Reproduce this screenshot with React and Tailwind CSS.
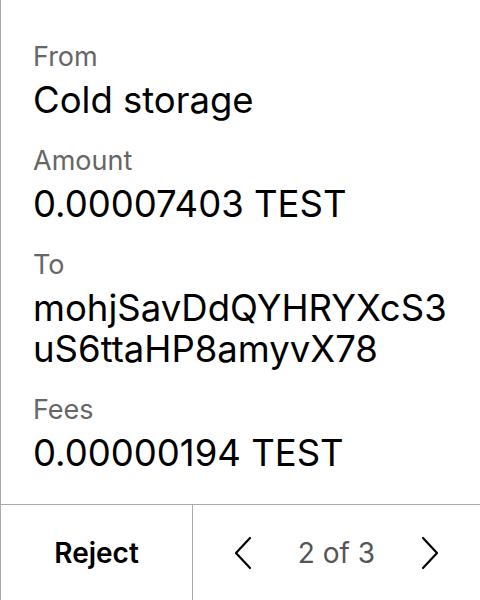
import React from 'react';

const Field = ({ label, children }) => (
  <div className="flex flex-col">
    <span className="text-[27px] leading-[32px] text-[#666666]">{label}</span>
    <span className="mt-[7px] text-[36.5px] leading-[41px] text-black">{children}</span>
  </div>
);

const Chevron = ({ dir }) => (
  <svg width="20" height="34" viewBox="0 0 20 34" fill="none" stroke="#000" strokeWidth="2.2" strokeLinecap="round" strokeLinejoin="round">
    {dir === 'left' ? <path d="M17 2 L3 17 L17 32" /> : <path d="M3 2 L17 17 L3 32" />}
  </svg>
);

export default function App() {
  return (
    <div className="flex h-[600px] w-[480px] flex-col border-l border-[#aaaaaa] bg-white font-['Inter',sans-serif]">
      <div className="flex flex-1 flex-col gap-[24px] pl-[32px] pt-[41px]">
        <Field label="From">Cold storage</Field>
        <Field label="Amount">0.00007403 TEST</Field>
        <Field label="To">
          mohjSavDdQYHRYXcS3
          <br />
          uS6ttaHP8amyvX78
        </Field>
        <Field label="Fees">0.00000194 TEST</Field>
      </div>
      <div className="flex h-[96px] border-t border-[#aaaaaa]">
        <button className="flex w-[192px] items-center justify-center border-r border-[#aaaaaa] text-[28px] font-semibold text-black">
          Reject
        </button>
        <div className="flex flex-1 items-center justify-between px-[40px]">
          <Chevron dir="left" />
          <span className="text-[28px] text-[#555555]">2 of 3</span>
          <Chevron dir="right" />
        </div>
      </div>
    </div>
  );
}
